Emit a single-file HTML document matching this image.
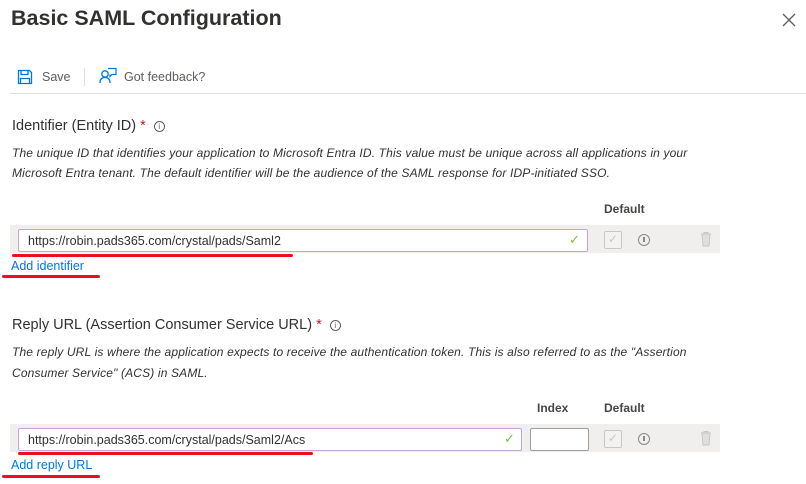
<!DOCTYPE html>
<html><head><meta charset="utf-8"><style>
*{margin:0;padding:0;box-sizing:border-box}
body{width:806px;height:484px;background:#fff;font-family:"Liberation Sans",sans-serif;color:#323130;position:relative;overflow:hidden}
.a{position:absolute;white-space:nowrap}
.desc{font-style:italic;font-size:12px;color:#323130;letter-spacing:0.15px}
.lbl{font-size:14.5px;color:#323130}
.star{color:#a4262c}
.info{display:inline-block;width:11px;height:11px;border:1px solid #605e5c;border-radius:50%;font-size:8px;line-height:9px;text-align:center;font-style:normal;vertical-align:1px;margin-left:8px;color:#605e5c}
.row{position:absolute;background:#f0efee;height:28px;left:10px;width:710px}
.inp{position:absolute;background:#fff;border:1px solid #c8a3d4;border-radius:2px;height:23px;font-size:12.5px;padding:4px 0 0 9px;color:#323130}
.chk{position:absolute;color:#7fba4a;font-size:13px}
.red{position:absolute;height:3px;background:#e8101b;border-radius:2px}
.link{color:#0078d4;font-size:12.5px}
.hd{font-size:12px;font-weight:bold;color:#484644}
.cb{position:absolute;width:18px;height:18px;border:1px solid #c8c6c4;border-radius:2px;background:#f3f2f1}
.ic{position:absolute;width:12px;height:12px;border:1.3px solid #8a8886;border-radius:50%}
.ic:after{content:"";position:absolute;left:4px;top:2px;width:1.5px;height:5px;background:#8a8886}
</style></head><body>
<div class="a" style="left:11px;top:6px;font-size:21.5px;font-weight:bold;color:#323130">Basic SAML Configuration</div>
<svg class="a" style="left:782px;top:13px" width="14" height="14" viewBox="0 0 14 14"><path d="M1 1L13 13M13 1L1 13" stroke="#605e5c" stroke-width="1.3"/></svg>
<svg class="a" style="left:17px;top:69px" width="16" height="16" viewBox="0 0 16 16"><path d="M1.5 1.5h11l2 2v11h-13z" fill="none" stroke="#0078d4" stroke-width="1.3"/><path d="M4 1.5v4h7v-4M3.5 14.5v-5h9v5" fill="none" stroke="#0078d4" stroke-width="1.3"/></svg>
<div class="a" style="left:42px;top:70px;font-size:12.5px;color:#605e5c">Save</div>
<div class="a" style="left:84px;top:68px;width:1px;height:18px;background:#e1dfdd"></div>
<svg class="a" style="left:99px;top:67px" width="18" height="18" viewBox="0 0 18 18"><circle cx="6" cy="7" r="3.2" fill="none" stroke="#0078d4" stroke-width="1.3"/><path d="M1 16c0-4 2-5.5 5-5.5s5 1.5 5 5.5" fill="none" stroke="#0078d4" stroke-width="1.3"/><path d="M9 1.5h8v6h-4l-2 2v-2" fill="none" stroke="#0078d4" stroke-width="1.2"/></svg>
<div class="a" style="left:124px;top:70px;font-size:12.5px;color:#605e5c">Got feedback?</div>
<div class="a" style="left:10px;top:93px;width:796px;height:1px;background:#e1dfdd"></div>

<div class="a lbl" style="left:12px;top:118px">Identifier (Entity ID) <span class="star">*</span><span class="info">i</span></div>
<div class="a desc" style="left:12px;top:146px">The unique ID that identifies your application to Microsoft Entra ID. This value must be unique across all applications in your</div>
<div class="a desc" style="left:12px;top:166px">Microsoft Entra tenant. The default identifier will be the audience of the SAML response for IDP-initiated SSO.</div>
<div class="a hd" style="left:604px;top:202px">Default</div>
<div class="row" style="top:225px"></div>
<div class="inp" style="left:18px;top:229px;width:570px">https://robin.pads365.com/crystal/pads/Saml2</div>
<div class="chk" style="left:569px;top:232px">✓</div>
<div class="cb" style="left:604px;top:231px"></div>
<div class="a" style="left:608px;top:232px;color:#c8c6c4;font-size:12px">✓</div>
<div class="ic" style="left:638px;top:234px"></div>
<svg class="a" style="left:700px;top:231px" width="12" height="16" viewBox="0 0 12 16"><path d="M1 3h10M4 3V1.5h4V3M2 3l1 12h6l1-12" fill="#e1dfdd" stroke="#c8c6c4"/></svg>
<div class="red" style="left:12px;top:254px;width:281px"></div>
<div class="a link" style="left:11px;top:259px">Add identifier</div>
<div class="red" style="left:2px;top:275px;width:98px"></div>

<div class="a lbl" style="left:12px;top:317px">Reply URL (Assertion Consumer Service URL) <span class="star">*</span><span class="info">i</span></div>
<div class="a desc" style="left:12px;top:345px">The reply URL is where the application expects to receive the authentication token. This is also referred to as the "Assertion</div>
<div class="a desc" style="left:12px;top:366px">Consumer Service" (ACS) in SAML.</div>
<div class="a hd" style="left:537px;top:401px">Index</div>
<div class="a hd" style="left:604px;top:401px">Default</div>
<div class="row" style="top:424px"></div>
<div class="inp" style="left:18px;top:428px;width:504px">https://robin.pads365.com/crystal/pads/Saml2/Acs</div>
<div class="chk" style="left:504px;top:431px">✓</div>
<div class="a" style="left:530px;top:428px;width:59px;height:23px;background:#fff;border:1px solid #a19f9d;border-radius:2px"></div>
<div class="cb" style="left:604px;top:430px"></div>
<div class="a" style="left:608px;top:431px;color:#c8c6c4;font-size:12px">✓</div>
<div class="ic" style="left:638px;top:433px"></div>
<svg class="a" style="left:700px;top:430px" width="12" height="16" viewBox="0 0 12 16"><path d="M1 3h10M4 3V1.5h4V3M2 3l1 12h6l1-12" fill="#e1dfdd" stroke="#c8c6c4"/></svg>
<div class="red" style="left:18px;top:452px;width:295px"></div>
<div class="a link" style="left:11px;top:458px">Add reply URL</div>
<div class="red" style="left:2px;top:475px;width:98px"></div>
</body></html>
